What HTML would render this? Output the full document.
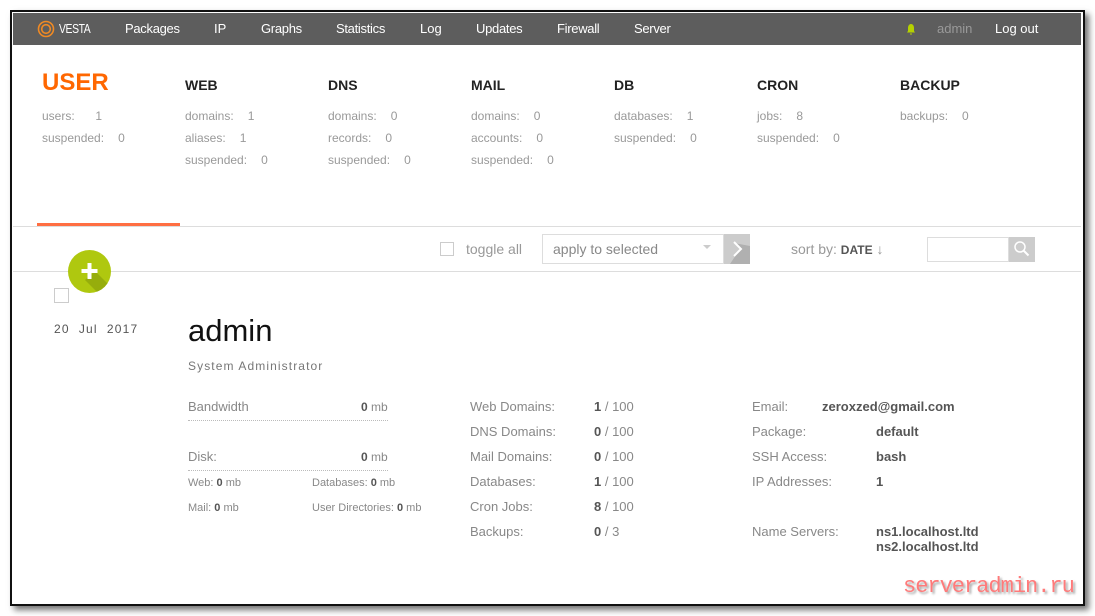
<!DOCTYPE html>
<html><head><meta charset="utf-8"><style>
*{margin:0;padding:0;box-sizing:border-box}
body{width:1095px;height:616px;background:#fff;position:relative;overflow:hidden;font-family:"Liberation Sans",Arial,sans-serif}
.frame{position:absolute;left:10px;top:10px;width:1075px;height:596px;border:2px solid #111;background:#fff;box-shadow:4px 4px 6px rgba(0,0,0,.55)}
.a{position:absolute;white-space:nowrap}
.nav{position:absolute;left:13px;top:13px;width:1068px;height:32px;background:#5d5d5d}
.nav .a{color:#fff;font-size:13px;top:8px}
.h{font-size:14px;font-weight:bold;color:#222;top:77px}
.l{font-size:12px;color:#999}
.l b{font-weight:normal;color:#999;margin-left:14px}
.g{font-size:13px;color:#888}
.v{font-size:13px;color:#555;font-weight:bold}
.s{font-size:11px;color:#888}
.s b{color:#555}
</style></head><body>
<div class="frame"></div>
<div class="nav">
 <svg class="a" style="left:24px;top:7px" width="18" height="18" viewBox="0 0 18 18"><circle cx="9" cy="9" r="7.5" fill="none" stroke="#f08a24" stroke-width="1.6"/><circle cx="9" cy="9" r="4.3" fill="none" stroke="#f08a24" stroke-width="1.6"/></svg>
 <div class="a" style="left:46px;top:8px;font-size:13px;letter-spacing:-0.5px;transform:scaleX(.8);transform-origin:left">VESTA</div>
 <div class="a" style="left:112px;letter-spacing:-0.3px">Packages</div>
 <div class="a" style="left:201px">IP</div>
 <div class="a" style="left:248px;letter-spacing:-0.3px">Graphs</div>
 <div class="a" style="left:323px;letter-spacing:-0.3px">Statistics</div>
 <div class="a" style="left:407px">Log</div>
 <div class="a" style="left:463px;letter-spacing:-0.3px">Updates</div>
 <div class="a" style="left:544px;letter-spacing:-0.3px">Firewall</div>
 <div class="a" style="left:621px;letter-spacing:-0.3px">Server</div>
 <svg class="a" style="left:893px;top:10px" width="10" height="12" viewBox="0 0 10 12"><path d="M5 1C3 1 2 3 2 5v3L1 9.5h8L8 8V5C8 3 7 1 5 1z M4 10.5h2v1H4z" fill="#b5d100"/></svg>
 <div class="a" style="left:924px;color:#999">admin</div>
 <div class="a" style="left:982px">Log out</div>
</div>

<div class="a" style="left:42px;top:69px;font-size:24px;font-weight:bold;color:#ff6701">USER</div>
<div class="a l" style="left:42px;top:109px">users:<b>&nbsp;&nbsp;1</b></div>
<div class="a l" style="left:42px;top:131px">suspended:<b>0</b></div>

<div class="a h" style="left:185px">WEB</div>
<div class="a l" style="left:185px;top:109px">domains:<b>1</b></div>
<div class="a l" style="left:185px;top:131px">aliases:<b>1</b></div>
<div class="a l" style="left:185px;top:153px">suspended:<b>0</b></div>

<div class="a h" style="left:328px">DNS</div>
<div class="a l" style="left:328px;top:109px">domains:<b>0</b></div>
<div class="a l" style="left:328px;top:131px">records:<b>0</b></div>
<div class="a l" style="left:328px;top:153px">suspended:<b>0</b></div>

<div class="a h" style="left:471px">MAIL</div>
<div class="a l" style="left:471px;top:109px">domains:<b>0</b></div>
<div class="a l" style="left:471px;top:131px">accounts:<b>0</b></div>
<div class="a l" style="left:471px;top:153px">suspended:<b>0</b></div>

<div class="a h" style="left:614px">DB</div>
<div class="a l" style="left:614px;top:109px">databases:<b>1</b></div>
<div class="a l" style="left:614px;top:131px">suspended:<b>0</b></div>

<div class="a h" style="left:757px">CRON</div>
<div class="a l" style="left:757px;top:109px">jobs:<b>8</b></div>
<div class="a l" style="left:757px;top:131px">suspended:<b>0</b></div>

<div class="a h" style="left:900px">BACKUP</div>
<div class="a l" style="left:900px;top:109px">backups:<b>0</b></div>

<div class="a" style="left:13px;top:226px;width:1068px;height:1px;background:#ddd"></div>
<div class="a" style="left:37px;top:223px;width:143px;height:3px;background:#ff6e42"></div>
<div class="a" style="left:13px;top:271px;width:1068px;height:1px;background:#ddd"></div>

<div class="a" style="left:440px;top:242px;width:14px;height:14px;border:1px solid #ccc"></div>
<div class="a" style="left:466px;top:241px;font-size:14px;color:#999">toggle all</div>
<div class="a" style="left:542px;top:234px;width:182px;height:30px;border:1px solid #ddd"></div>
<div class="a" style="left:553px;top:241px;font-size:14px;color:#888">apply to selected</div>
<div class="a" style="left:703px;top:245px;width:0;height:0;border-left:4px solid transparent;border-right:4px solid transparent;border-top:4px solid #ccc"></div>
<div class="a" style="left:724px;top:234px;width:26px;height:30px;background:#ccc;overflow:hidden"><svg width="26" height="30"><path d="M10 9l6 6L6 30h20V12z" fill="#b0b0b0"/><path d="M10 8l7 7-7 7" fill="none" stroke="#fff" stroke-width="2"/></svg></div>
<div class="a" style="left:791px;top:241px;font-size:14px;color:#999">sort by: <span style="font-size:12px;font-weight:bold;color:#555">DATE</span> <span style="color:#999">↓</span></div>
<div class="a" style="left:927px;top:237px;width:82px;height:25px;border:1px solid #ddd"></div>
<div class="a" style="left:1009px;top:237px;width:26px;height:25px;background:#ccc"><svg width="26" height="25"><circle cx="11" cy="10" r="5" fill="none" stroke="#fff" stroke-width="1.5"/><path d="M14.5 13.5l5 5" stroke="#fff" stroke-width="2"/></svg></div>

<div class="a" style="left:68px;top:250px;width:43px;height:43px;border-radius:50%;background:#afc80f;overflow:hidden"><svg width="43" height="43"><path d="M27 21L43 37V43H30L17 30z" fill="#96ad0c"/><path d="M21.5 13v16M13.5 21h16" stroke="#fff" stroke-width="4"/></svg></div>
<div class="a" style="left:54px;top:288px;width:15px;height:15px;border:1px solid #ccc"></div>

<div class="a" style="left:54px;top:322px;font-size:12px;color:#555;letter-spacing:1.2px">20&nbsp; Jul&nbsp; 2017</div>
<div class="a" style="left:188px;top:313px;font-size:31px;color:#111">admin</div>
<div class="a" style="left:188px;top:359px;font-size:12px;color:#777;letter-spacing:1.1px">System Administrator</div>

<div class="a g" style="left:188px;top:399px">Bandwidth</div>
<div class="a g" style="left:361px;top:400px;font-size:12px"><b style="color:#555">0</b> mb</div>
<div class="a" style="left:188px;top:420px;width:200px;border-top:1px dotted #bbb"></div>
<div class="a g" style="left:188px;top:449px">Disk:</div>
<div class="a g" style="left:361px;top:450px;font-size:12px"><b style="color:#555">0</b> mb</div>
<div class="a" style="left:188px;top:470px;width:200px;border-top:1px dotted #bbb"></div>
<div class="a s" style="left:188px;top:477px">Web: <b>0</b> mb</div>
<div class="a s" style="left:312px;top:477px">Databases: <b>0</b> mb</div>
<div class="a s" style="left:188px;top:502px">Mail: <b>0</b> mb</div>
<div class="a s" style="left:312px;top:502px">User Directories: <b>0</b> mb</div>

<div class="a g" style="left:470px;top:399px">Web Domains:</div><div class="a g" style="left:594px;top:399px"><b style="color:#555">1</b> / 100</div>
<div class="a g" style="left:470px;top:424px">DNS Domains:</div><div class="a g" style="left:594px;top:424px"><b style="color:#555">0</b> / 100</div>
<div class="a g" style="left:470px;top:449px">Mail Domains:</div><div class="a g" style="left:594px;top:449px"><b style="color:#555">0</b> / 100</div>
<div class="a g" style="left:470px;top:474px">Databases:</div><div class="a g" style="left:594px;top:474px"><b style="color:#555">1</b> / 100</div>
<div class="a g" style="left:470px;top:499px">Cron Jobs:</div><div class="a g" style="left:594px;top:499px"><b style="color:#555">8</b> / 100</div>
<div class="a g" style="left:470px;top:524px">Backups:</div><div class="a g" style="left:594px;top:524px"><b style="color:#555">0</b> / 3</div>

<div class="a g" style="left:752px;top:399px">Email:</div><div class="a v" style="left:822px;top:399px">zeroxzed@gmail.com</div>
<div class="a g" style="left:752px;top:424px">Package:</div><div class="a v" style="left:876px;top:424px">default</div>
<div class="a g" style="left:752px;top:449px">SSH Access:</div><div class="a v" style="left:876px;top:449px">bash</div>
<div class="a g" style="left:752px;top:474px">IP Addresses:</div><div class="a v" style="left:876px;top:474px">1</div>
<div class="a g" style="left:752px;top:524px">Name Servers:</div><div class="a v" style="left:876px;top:524px;line-height:15px">ns1.localhost.ltd<br>ns2.localhost.ltd</div>

<div class="a" style="left:903px;top:574px;font-family:'Liberation Mono',monospace;font-size:22px;color:#ff7a7a;text-shadow:2px 2px 2px rgba(0,0,0,.35);letter-spacing:-1px">serveradmin.ru</div>
</body></html>
